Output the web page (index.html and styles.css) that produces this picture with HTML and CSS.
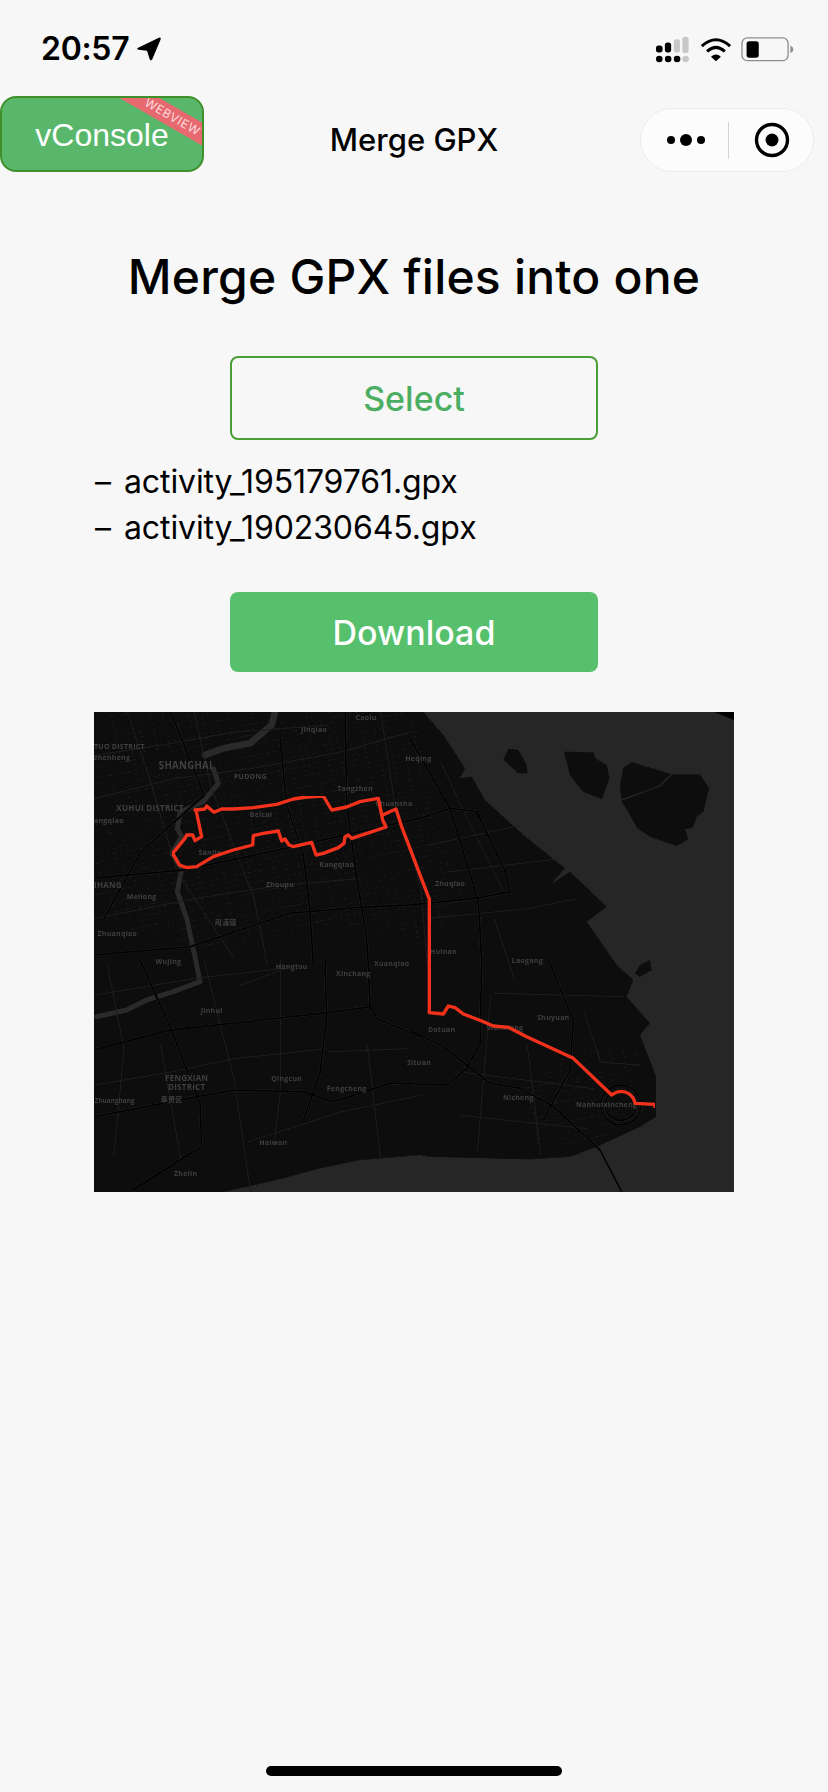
FILE: index.html
```html
<!DOCTYPE html>
<html lang="en">
<head>
<meta charset="utf-8">
<title>Merge GPX</title>
<link rel="stylesheet" href="styles.css">
</head>
<body>
<div class="page">
  <header class="status">
    <div class="status-left">
      <span class="time">20:57</span>
      <svg class="arrow" viewBox="415 113 72 73"><path d="M481 115Q489 113 486 121L461 181Q457 188 453 181L445 155L419 152Q412 149 418 146Z" fill="#000"/></svg>
    </div>
    <svg class="status-icons" viewBox="720 105 425 85">
      <g fill="#000">
        <rect x="723" y="137" width="20" height="21" rx="8"/><rect x="750" y="128" width="19" height="30" rx="8"/>
        <circle cx="733" cy="178" r="10"/><circle cx="760" cy="178" r="10"/><circle cx="787" cy="178" r="10"/>
      </g>
      <g fill="#c8c8c8">
        <rect x="777" y="118" width="19" height="40" rx="8"/><rect x="803" y="110" width="19" height="50" rx="8"/>
        <circle cx="813" cy="178" r="10"/>
      </g>
      <g fill="none" stroke="#000" stroke-width="9">
        <path d="M862 139Q905 100 948 139"/><path d="M878 155Q905 130 932 155"/>
      </g>
      <path d="M890 171Q905 158 920 171L905 185Z" fill="#000"/>
      <rect x="984" y="114" width="140" height="69" rx="16" fill="none" stroke="#8e8e8e" stroke-width="4"/>
      <rect x="998" y="124" width="37" height="50" rx="8" fill="#000"/>
      <path d="M1131 137Q1140 141 1140 149Q1140 156 1131 160Z" fill="#8e8e8e"/>
    </svg>
  </header>

  <nav class="nav">
    <h2 class="nav-title">Merge GPX</h2>
    <div class="capsule">
      <svg class="capsule-more" viewBox="0 0 38 16"><circle cx="4" cy="8" r="4"/><circle cx="19" cy="8" r="6"/><circle cx="34" cy="8" r="4"/></svg>
      <span class="capsule-line"></span>
      <svg class="capsule-home" viewBox="0 0 36 36"><circle cx="18" cy="18" r="15.5" fill="none" stroke="#000" stroke-width="3.4"/><circle cx="18" cy="18" r="6.5"/></svg>
    </div>
  </nav>

  <div class="vconsole">vConsole<span class="ribbon"><span class="ribbon-text">WEBVIEW</span></span></div>

  <main class="content">
    <h1 class="heading">Merge GPX files into one</h1>
    <button class="btn btn-outline">Select</button>
    <ul class="files">
      <li>activity_195179761.gpx</li>
      <li>activity_190230645.gpx</li>
    </ul>
    <button class="btn btn-solid">Download</button>
    <svg class="map" viewBox="0 0 1920 1440">
      <defs>
        <pattern id="mesh" width="74" height="58" patternUnits="userSpaceOnUse" patternTransform="rotate(-8)">
          <path d="M0 20H30M44 20H74M24 0V30M58 16L50 58M4 44H40" stroke="#131313" stroke-width="2" fill="none"/>
        </pattern>
        <pattern id="dense" width="38" height="31" patternUnits="userSpaceOnUse" patternTransform="rotate(-12)">
          <path d="M0 10H38M12 0V31M29 10V31M0 24H20" stroke="#171717" stroke-width="1.6" fill="none"/>
        </pattern>
        <filter id="soft" x="0" y="0" width="100%" height="100%">
          <feGaussianBlur stdDeviation="1.2"/>
        </filter>
        <filter id="soft-route" x="0" y="0" width="100%" height="100%">
          <feGaussianBlur stdDeviation="1"/>
        </filter>
      </defs>
      <rect width="1920" height="1440" fill="#262626"/>
      <g filter="url(#soft)">
      <path fill="#0a0a0a" d="M988 0L1048 69L1113 169L1098 199L1133 194L1173 264L1288 369L1413 469L1368 519L1428 479L1538 584L1478 629L1568 759L1618 804L1598 854L1668 934L1638 969L1686 1094L1686 1214L1638 1244L1508 1304L1428 1334L1308 1342L1008 1334L978 1329L798 1344L678 1369L548 1404L438 1429L388 1440L0 1440L0 0Z"/>
      <path fill="url(#mesh)" d="M988 0L1048 69L1113 169L1098 199L1133 194L1173 264L1288 369L1413 469L1368 519L1428 479L1538 584L1478 629L1568 759L1618 804L1598 854L1668 934L1638 969L1686 1094L1686 1214L1638 1244L1508 1304L1428 1334L1308 1342L1008 1334L978 1329L798 1344L678 1369L548 1404L438 1429L388 1440L0 1440L0 0Z"/>
      <path fill="url(#dense)" d="M0 0H960L1040 330L1120 560L1000 700L700 640L420 720L120 660L0 560Z"/>
      <path fill="url(#dense)" d="M1440 1000L1640 1020L1660 1210L1480 1300L1290 1300L1300 1120Z"/>
      <g fill="#0a0a0a">
        <path d="M1243 111L1273 114L1298 159L1300 184L1273 184L1228 144Z"/>
        <path d="M1410 119L1498 121L1503 139L1538 159L1546 199L1523 261L1468 239L1428 189Z"/>
        <path d="M1613 151L1733 187L1818 187L1845 229L1828 299L1808 314L1796 347L1773 351L1783 382L1748 401L1668 374L1630 349L1603 299L1583 269L1578 219L1588 169Z"/>
        <path d="M1668 744L1673 774L1638 794L1623 784L1638 759Z"/>
      </g>
      <path d="M1860 0H1920V24Z" fill="#000"/>
      <path d="M1583 264L1650 240L1700 220L1733 187" fill="none" stroke="#262626" stroke-width="4"/>

      <g fill="none" stroke="#2a2a2a" stroke-linejoin="round" stroke-linecap="round">
        <path stroke-width="20" d="M543 0L533 39L468 94L388 109L333 129"/>
        <path stroke-width="15" d="M358 170L373 214L328 269L258 300L250 349L263 374L233 424L263 469L250 539L278 619L308 759L318 809L238 839L158 864L98 894L8 914"/>
      </g>

      <g fill="none" stroke="#1f1f1f" stroke-width="3">
        <path d="M0 130L200 100L420 60L700 40M0 260L240 200L470 170L740 120L950 60"/>
        <path d="M100 0L170 210L250 480L420 740M300 0L350 220L480 560L520 760"/>
        <path d="M0 620L300 560L560 520L800 500M0 850L300 800L560 770"/>
        <path d="M860 0L900 260L980 520L1000 760M1000 620L1300 590L1450 560"/>
        <path d="M0 1120L230 1080L420 1040L700 1010M330 744L420 1100L470 1440"/>
        <path d="M560 744L560 1130L540 1300M820 1000L860 1340M460 1290L740 1200L980 1150"/>
        <path d="M1198 844L1588 854M1100 1080L1500 1130M1100 1210L1480 1250M1190 850L1150 1320"/>
        <path d="M1470 900L1520 1050L1640 1060M1300 1000L1340 1330"/>
        <path d="M1040 150L1120 320L1240 560M1000 400L1280 340M1060 480L1400 440M1200 620L1260 800"/>
        <path d="M40 760L90 1010L60 1330M200 1000L260 1340M440 820L600 760M700 1020L940 1010"/>
      </g>
      <g fill="none" stroke-linejoin="round">
        <g stroke="#1c1c1c" stroke-width="8">
          <path d="M0 499L268 474L528 419L978 319L1068 289L1148 299L1238 489L1248 539L1148 559L948 579L818 584L588 604L288 704L0 729"/>
          <path d="M753 0L758 279L788 499L818 679L823 759L828 884L848 919L978 974"/>
          <path d="M693 744L698 914L678 1084L628 1224"/>
          <path d="M558 79L578 279L628 429L648 599L658 759"/>
          <path d="M138 744L228 944L318 1174L323 1304L258 1344L118 1434"/>
          <path d="M0 1014L228 954L688 904L828 884"/>
          <path d="M0 1214L308 1154L418 1134L628 1139L718 1169L888 1114L1058 1119L1118 1069L1158 994L1163 744L1153 569L1068 289L988 149L948 79"/>
          <path d="M948 954L1048 1004L1188 1114L1278 1129L1378 1184L1518 1314"/>
          <path d="M1363 744L1438 924L1428 1074L1348 1224"/>
          <path d="M230 0L330 250L140 420L30 620"/>
          <circle cx="1580" cy="1179" r="60"/>
          <circle cx="1580" cy="1179" r="46"/>
        </g>
        <g stroke="#000" stroke-width="4.5">
          <path d="M0 499L268 474L528 419L978 319L1068 289L1148 299L1238 489L1248 539L1148 559L948 579L818 584L588 604L288 704L0 729"/>
          <path d="M753 0L758 279L788 499L818 679L823 759L828 884L848 919L978 974"/>
          <path d="M693 744L698 914L678 1084L628 1224"/>
          <path d="M558 79L578 279L628 429L648 599L658 759"/>
          <path d="M138 744L228 944L318 1174L323 1304L258 1344L118 1434"/>
          <path d="M0 1014L228 954L688 904L828 884"/>
          <path d="M0 1214L308 1154L418 1134L628 1139L718 1169L888 1114L1058 1119L1118 1069L1158 994L1163 744L1153 569L1068 289L988 149L948 79"/>
          <path d="M948 954L1048 1004L1188 1114L1278 1129L1378 1184L1518 1314L1583 1439"/>
          <path d="M1363 744L1438 924L1428 1074L1348 1224"/>
          <path d="M230 0L330 250L140 420L30 620"/>
          <circle cx="1580" cy="1179" r="60"/>
          <circle cx="1580" cy="1179" r="46"/>
        </g>
      </g>

      <g class="labels">
        <text x="816" y="24" text-anchor="middle">Caolu</text>
        <text x="660" y="59" text-anchor="middle">Jinqiao</text>
        <text x="0" y="110">TUO DISTRICT</text>
        <text x="0" y="145">zhenheng</text>
        <text x="275" y="170" text-anchor="middle" class="label-big">SHANGHAI</text>
        <text x="469" y="201" text-anchor="middle">PUDONG</text>
        <text x="973" y="147" text-anchor="middle">Heqing</text>
        <text x="783" y="237" text-anchor="middle">Tangzhen</text>
        <text x="900" y="282" text-anchor="middle">Chuansha</text>
        <text x="168" y="298" text-anchor="middle" class="label-mid">XUHUI DISTRICT</text>
        <text x="0" y="332">angqiao</text>
        <text x="501" y="316" text-anchor="middle">Beicai</text>
        <text x="348" y="429" text-anchor="middle">Sanlin</text>
        <text x="728" y="466" text-anchor="middle">Kangqiao</text>
        <text x="0" y="528" class="label-mid">IHANG</text>
        <text x="558" y="524" text-anchor="middle">Zhoupu</text>
        <text x="143" y="562" text-anchor="middle">Meilong</text>
        <text x="395" y="640" text-anchor="middle" class="label-cjk">周浦镇</text>
        <text x="70" y="672" text-anchor="middle">Zhuanqiao</text>
        <text x="223" y="757" text-anchor="middle">Wujing</text>
        <text x="1068" y="522" text-anchor="middle">Zhuqiao</text>
        <text x="1048" y="727" text-anchor="middle">Huinan</text>
        <text x="1300" y="754" text-anchor="middle">Laogang</text>
        <text x="593" y="771" text-anchor="middle">Hangtou</text>
        <text x="778" y="793" text-anchor="middle">Xinchang</text>
        <text x="893" y="763" text-anchor="middle">Xuanqiao</text>
        <text x="353" y="904" text-anchor="middle">Jinhui</text>
        <text x="278" y="1108" text-anchor="middle" class="label-mid">FENGXIAN</text>
        <text x="278" y="1133" text-anchor="middle" class="label-mid">DISTRICT</text>
        <text x="233" y="1169" text-anchor="middle" class="label-cjk">奉贤区</text>
        <text x="578" y="1107" text-anchor="middle">Qingcun</text>
        <text x="758" y="1137" text-anchor="middle">Fengcheng</text>
        <text x="975" y="1058" text-anchor="middle">Situan</text>
        <text x="2" y="1174" class="label-small">Zhuanghang</text>
        <text x="538" y="1298" text-anchor="middle">Haiwan</text>
        <text x="275" y="1391" text-anchor="middle">Zhelin</text>
        <text x="1378" y="923" text-anchor="middle">Shuyuan</text>
        <text x="1043" y="960" text-anchor="middle">Datuan</text>
        <text x="1233" y="955" text-anchor="middle">Wanxiang</text>
        <text x="1273" y="1164" text-anchor="middle">Nicheng</text>
        <text x="1538" y="1185" text-anchor="middle">Nanhuixincheng</text>
      </g>
      </g>

      <g filter="url(#soft-route)" fill="none" stroke="#f4321f" stroke-width="10" stroke-linejoin="round" stroke-linecap="round">
        <path d="M303 294L333 291L338 282L360 301L383 291L418 291L478 287L548 277L598 261L638 255L688 252L713 294L758 285L798 269L853 259L866 324L876 345L828 361L773 379L763 369L753 374L750 394L733 407L688 424L666 429L653 391L598 404L585 399L573 381L563 387L553 357L508 364L478 371L476 399L418 414L358 434L308 464L278 467L256 459L236 424L273 379L278 369L296 369L303 386L323 374L306 294Z"/>
        <path d="M866 309L906 291L923 344L1003 554L1006 560L1006 902L1048 906L1063 882L1083 887L1108 906L1163 927L1198 942L1243 946L1298 974L1438 1039L1553 1149Q1578 1130 1603 1144Q1620 1155 1623 1174L1683 1177L1683 1187"/>
      </g>
    </svg>
  </main>

  <footer class="home-area"><span class="home-bar"></span></footer>
</div>
</body>
</html>
```

FILE: styles.css
```css
* {
  box-sizing: border-box;
}

html,
body {
  margin: 0;
  padding: 0;
  background: #f7f7f7;
}

body {
  font-family: Inter, "Noto Sans", "Liberation Sans", sans-serif;
  color: #000;
}

.page {
  position: relative;
  display: flex;
  flex-direction: column;
  width: 828px;
  height: 1792px;
  overflow: hidden;
}

.status {
  display: flex;
  align-items: center;
  justify-content: space-between;
  height: 96px;
  padding: 2px 32px 0 41px;
}

.status-left {
  display: flex;
  align-items: center;
  gap: 8px;
}

.time {
  font-size: 32px;
  font-weight: 600;
  line-height: 1;
  letter-spacing: -0.3px;
}

.arrow {
  width: 24px;
  height: 24px;
}

.status-icons {
  width: 142px;
  height: 28px;
}

.nav {
  position: relative;
  display: flex;
  align-items: center;
  justify-content: flex-end;
  height: 88px;
  padding: 12px 14px 12px 0;
}

.nav-title {
  position: absolute;
  left: 0;
  right: 0;
  top: 26px;
  margin: 0;
  font-size: 31px;
  font-weight: 500;
  line-height: 36px;
  text-align: center;
}

.capsule {
  display: flex;
  align-items: center;
  width: 174px;
  height: 64px;
  border: 1px solid #ececec;
  border-radius: 32px;
  background: #fcfcfc;
}

.capsule-more {
  width: 38px;
  height: 16px;
  margin-left: 26px;
  margin-right: 23px;
}

.capsule-line {
  width: 1px;
  height: 37px;
  background: #d5d5d5;
}

.capsule-home {
  width: 36px;
  height: 36px;
  margin-left: 25px;
}

.vconsole {
  position: absolute;
  left: 0;
  top: 96px;
  width: 204px;
  height: 76px;
  overflow: hidden;
  border: 2px solid #3f8f2b;
  border-radius: 16px;
  background: #59b76b;
  color: #fff;
  font-family: "Liberation Sans", Arial, sans-serif;
  font-size: 32px;
  line-height: 74px;
  text-align: center;
}

.ribbon {
  position: absolute;
  top: 7px;
  right: -32px;
  display: block;
  width: 130px;
  height: 20px;
  background: #e5696f;
  line-height: 20px;
  transform: rotate(30deg);
}

.ribbon-text {
  display: block;
  padding-left: 8px;
  color: #ffd9dc;
  font-family: Inter, sans-serif;
  font-size: 12px;
  letter-spacing: 0.6px;
  line-height: 20px;
  text-align: center;
}

.content {
  display: flex;
  flex-direction: column;
  align-items: center;
  padding-top: 64px;
}

.heading {
  margin: 0 0 50px;
  font-size: 48px;
  font-weight: 500;
  letter-spacing: 0.2px;
  line-height: 58px;
}

.btn {
  display: block;
  width: 368px;
  border-radius: 8px;
  font-family: inherit;
  font-size: 34px;
  font-weight: 500;
}

.btn-outline {
  height: 84px;
  border: 2px solid #4a9e35;
  background: transparent;
  color: #4cae62;
}

.btn-solid {
  height: 80px;
  border: 0;
  background: #57c06d;
  color: #fff;
}

.files {
  align-self: stretch;
  margin: 19px 0 41px;
  padding: 0 0 0 95px;
  font-size: 32px;
  letter-spacing: -0.1px;
  line-height: 46px;
  list-style: none;
}

.files li::before {
  content: "–";
  display: inline-block;
  width: 29px;
}

.map {
  display: block;
  width: 640px;
  height: 480px;
  margin-top: 40px;
}

.labels {
  fill: #404040;
  font-family: "Open Sans", "Noto Sans", sans-serif;
  font-size: 21px;
  font-weight: 700;
  letter-spacing: 0.8px;
}

.label-big {
  font-size: 29px;
}

.label-mid {
  font-size: 24px;
}

.label-small {
  font-size: 19px;
  letter-spacing: 0.2px;
}

.label-cjk {
  font-family: "Noto Sans CJK SC", sans-serif;
}

.home-area {
  display: flex;
  justify-content: center;
  margin-top: auto;
  padding-bottom: 16px;
}

.home-bar {
  width: 296px;
  height: 10px;
  border-radius: 5px;
  background: #000;
}
```
